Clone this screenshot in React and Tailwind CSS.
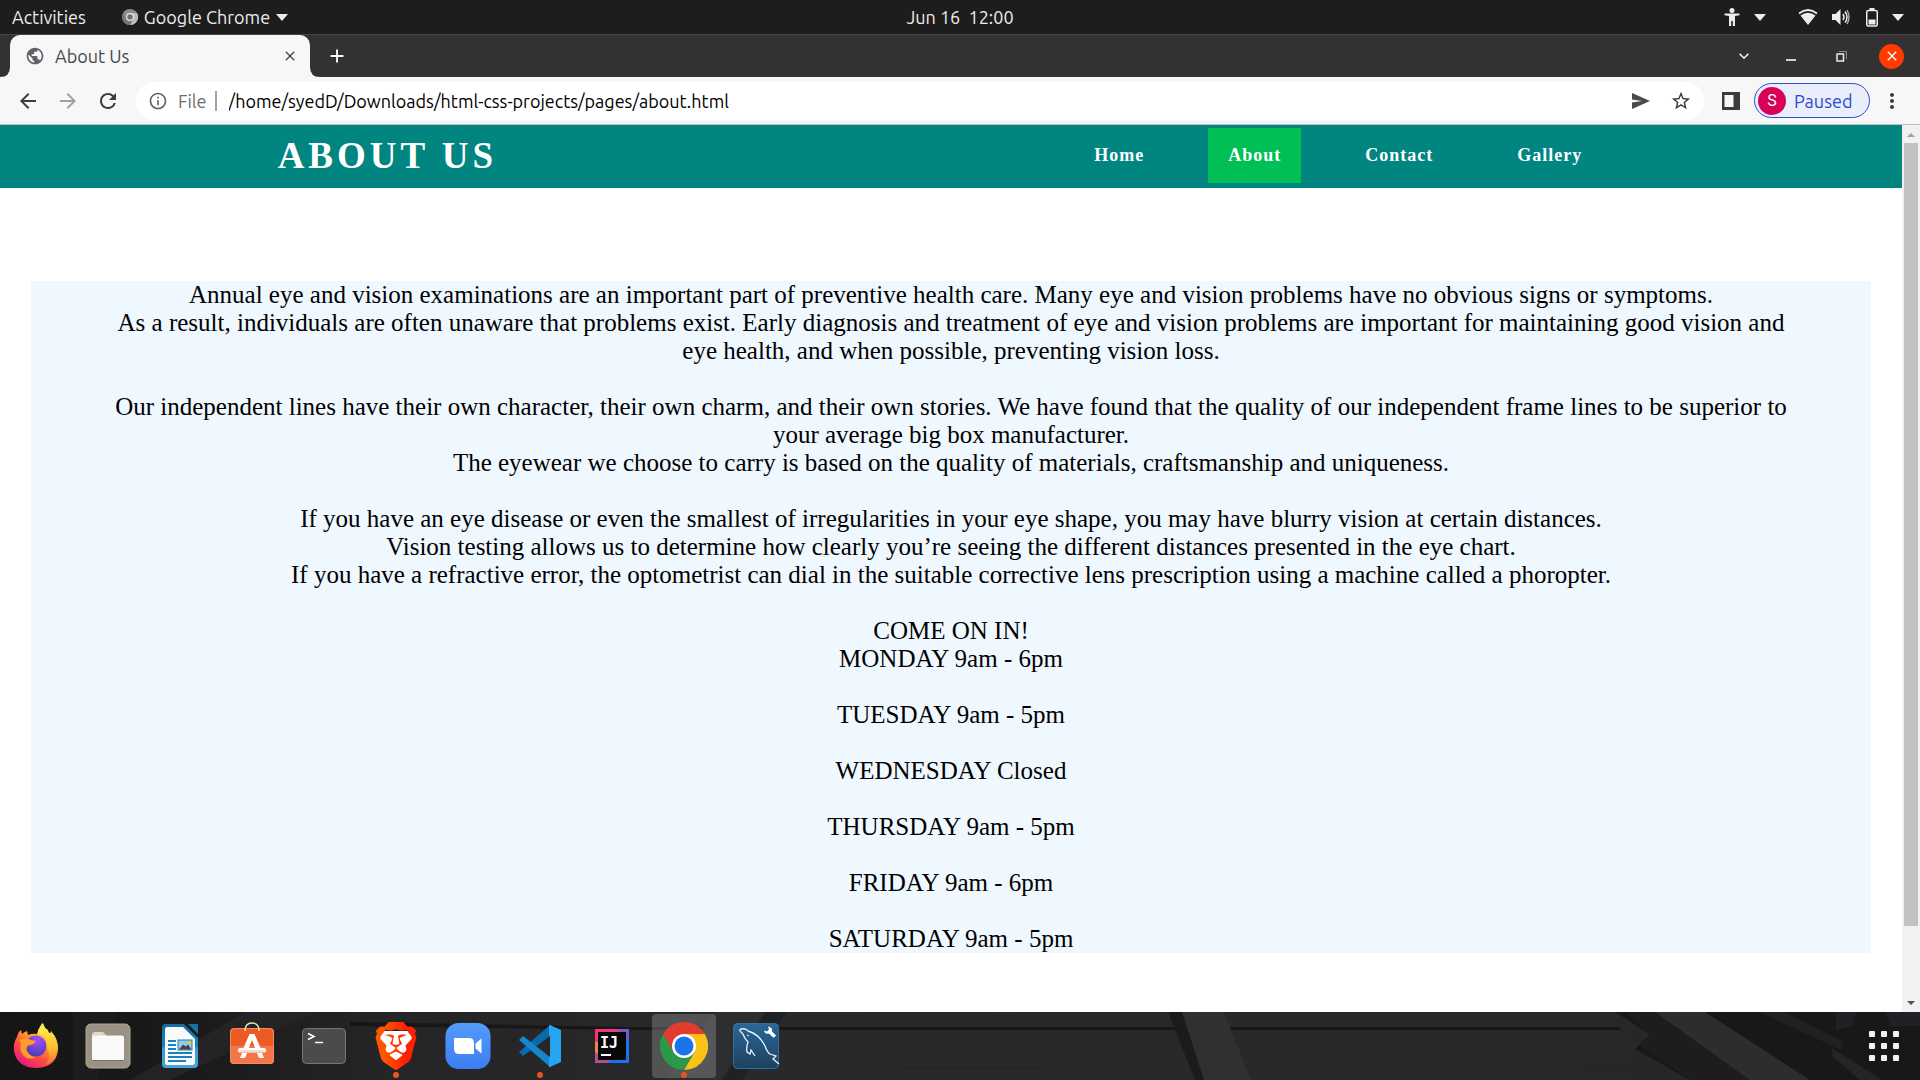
import React from "react";
import {
  MdArrowBack,
  MdArrowForward,
  MdClose,
  MdAdd,
  MdInfoOutline,
  MdKeyboardArrowDown,
  MdMoreVert,
  MdPublic,
  MdRefresh,
  MdStarBorder,
} from "react-icons/md";
import { SiBrave } from "react-icons/si";

const ui = "font-['Ubuntu','Noto_Sans',sans-serif]";

function Caret() {
  return (
    <svg className="h-[7px] w-3" viewBox="0 0 12 7" fill="#ececec">
      <path d="M0 0h12L6 7z" />
    </svg>
  );
}

function TopBar() {
  return (
    <header className="grid h-[34px] grid-cols-3 items-center bg-[#1d1d1d] px-3 text-[18px] leading-6 text-[#ececec]">
      <div className="flex items-center">
        <button type="button">Activities</button>
        <button type="button" className="ml-9 flex items-center gap-1.5">
          <svg className="size-4" viewBox="0 0 16 16">
            <circle cx="8" cy="8" r="8" fill="#8b8b8b" />
            <path d="M8 4h7a8 8 0 0 1-7 12l3.500-6z" fill="#bdbdbd" />
            <path d="M1.200 4A8 8 0 0 0 8 16l3-5-6 0z" fill="#777" />
            <circle cx="8" cy="8" r="4" fill="#e8e8e8" />
            <circle cx="8" cy="8" r="2.800" fill="#707070" />
          </svg>
          Google Chrome
          <Caret />
        </button>
      </div>
      <time className="text-center whitespace-pre">Jun 16  12:00</time>
      <div className="flex items-center justify-end pr-1">
        <button type="button" aria-label="Accessibility" className="mr-3 flex items-center gap-3.5">
          <svg className="h-[18px] w-4" viewBox="0 0 16 18" fill="#ececec">
            <circle cx="8" cy="2.500" r="2.500" />
            <path d="M.5 5.500h15v1.800L11 8v10H8.800v-5H7.200v5H5V8L.5 7.300z" />
          </svg>
          <Caret />
        </button>
        <button type="button" aria-label="System" className="ml-5 flex items-center gap-3.5">
          <svg className="h-4 w-5" viewBox="0 0 20 16">
            <path d="M1 4.500Q10-2.500 19 4.500" fill="none" stroke="#ececec" strokeWidth="1.800" />
            <path d="M2.500 6.500Q10 1 17.500 6.500L10 16z" fill="#ececec" />
          </svg>
          <svg className="h-4 w-[18px]" viewBox="0 0 18 16" fill="none" stroke="#ececec" strokeWidth="1.500">
            <path d="M0 5h3.500L8.500 0v16L3.500 11H0z" fill="#ececec" stroke="none" />
            <path d="M11 5q2 3 0 6M13 2.500q4 5.500 0 11" />
            <path d="M15 1q4 7 0 14" stroke="#aaa" />
          </svg>
          <svg className="ml-0.5 h-[19px] w-3" viewBox="0 0 12 19">
            <rect x=".75" y="2.500" width="10.500" height="15.500" rx="1.500" fill="none" stroke="#ececec" strokeWidth="1.500" />
            <path d="M3.500 0h5v2h-5zM2.500 11.500h7v5h-7z" fill="#ececec" />
          </svg>
          <Caret />
        </button>
      </div>
    </header>
  );
}

function TabStrip() {
  return (
    <div className="flex h-[43px] items-stretch justify-between border-t border-[#484648] bg-[#333132]">
      <div className="flex items-stretch">
        <svg className="w-2.5 self-end" viewBox="0 0 10 10" fill="#f7f7f7">
          <path d="M10 0v10H0Q10 10 10 0" />
        </svg>
        <div className="flex w-[300px] items-center rounded-t-[10px] bg-[#f7f7f7] pr-3 pl-[15px] text-[#45474a]">
          <MdPublic className="size-5 text-[#5f6368]" />
          <h2 className="ml-2.5 flex-1 text-[18px] leading-6">About Us</h2>
          <button type="button" aria-label="Close tab">
            <MdClose className="size-4" />
          </button>
        </div>
        <svg className="w-2.5 self-end" viewBox="0 0 10 10" fill="#f7f7f7">
          <path d="M0 0v10h10Q0 10 0 0" />
        </svg>
        <button type="button" aria-label="New tab" className="ml-1.5 text-white">
          <MdAdd className="size-[22px]" />
        </button>
      </div>
      <div className="flex items-center gap-8 pr-4 text-[#ececec]">
        <button type="button" aria-label="Search tabs">
          <MdKeyboardArrowDown className="size-5" />
        </button>
        <button type="button" aria-label="Minimize" className="mr-2 flex h-2.5 w-2.5 items-end">
          <span className="mt-3 h-0.5 w-full bg-[#d0d0d0]" />
        </button>
        <button type="button" aria-label="Restore">
          <svg className="size-[11px]" viewBox="0 0 11 11" fill="none">
            <path d="M3 .5h7.500V8" stroke="#8d8d8d" />
            <rect x="1" y="3" width="6.500" height="7" stroke="#ececec" strokeWidth="1.500" />
          </svg>
        </button>
        <button
          type="button"
          aria-label="Close"
          className="flex size-[25px] items-center justify-center rounded-full bg-[#ff3c00] text-white"
        >
          <MdClose className="size-4" />
        </button>
      </div>
    </div>
  );
}

function Toolbar() {
  return (
    <div className="flex h-12 items-center border-b border-[#c0c0c0] bg-[#f7f7f7] pr-4 pl-4 text-[#3c3c3c]">
      <div className="flex items-center gap-4">
        <button type="button" aria-label="Back">
          <MdArrowBack className="size-6" />
        </button>
        <button type="button" aria-label="Forward" className="text-[#a2a2a2]">
          <MdArrowForward className="size-6" />
        </button>
        <button type="button" aria-label="Reload">
          <MdRefresh className="size-6" />
        </button>
      </div>
      <div className="mr-4.5 ml-4 flex h-[38px] flex-1 items-center rounded-full bg-white pr-3 pl-3 text-[18px] leading-6">
        <MdInfoOutline className="size-5 text-[#5f6368]" />
        <label htmlFor="address" className="ml-2.5 text-[#6a6d72]">
          File
        </label>
        <span className="ml-2 h-5 w-0.5 bg-[#a0a0a0]" />
        <input
          id="address"
          className="ml-3 flex-1 text-black outline-none"
          defaultValue="/home/syedD/Downloads/html-css-projects/pages/about.html"
        />
        <button type="button" aria-label="Share" className="mr-5">
          <svg className="h-4 w-[18px]" viewBox="0 0 18 16" fill="#4a4a4a">
            <path d="M0 0l18 8L0 16V9.500L10 8 0 6.500z" />
          </svg>
        </button>
        <button type="button" aria-label="Bookmark">
          <MdStarBorder className="size-[22px]" />
        </button>
      </div>
      <button type="button" aria-label="Side panel" className="mr-3.5">
        <svg className="size-[18px]" viewBox="0 0 18 18">
          <rect width="18" height="18" fill="#3c3c3c" />
          <rect x="2.500" y="3" width="9" height="12" fill="#f7f7f7" />
        </svg>
      </button>
      <button
        type="button"
        className="flex h-[35px] w-[116px] items-center gap-2 rounded-full border border-[#2a4fd8] bg-[#e9eefa] pl-[3px] text-[18px] leading-6 text-[#2a4bd0]"
      >
        <span className="flex size-7 items-center justify-center rounded-full bg-[#d90057] font-['Roboto',sans-serif] text-base text-white">
          S
        </span>
        Paused
      </button>
      <button type="button" aria-label="Menu" className="ml-2.5">
        <MdMoreVert className="size-6" />
      </button>
    </div>
  );
}

const links = ["Home", "About", "Contact", "Gallery"];

const copy = [
  "Annual eye and vision examinations are an important part of preventive health care. Many eye and vision problems have no obvious signs or symptoms.",
  "As a result, individuals are often unaware that problems exist. Early diagnosis and treatment of eye and vision problems are important for maintaining good vision and eye health, and when possible, preventing vision loss.",
  "",
  "Our independent lines have their own character, their own charm, and their own stories. We have found that the quality of our independent frame lines to be superior to your average big box manufacturer.",
  "The eyewear we choose to carry is based on the quality of materials, craftsmanship and uniqueness.",
  "",
  "If you have an eye disease or even the smallest of irregularities in your eye shape, you may have blurry vision at certain distances.",
  "Vision testing allows us to determine how clearly you’re seeing the different distances presented in the eye chart.",
  "If you have a refractive error, the optometrist can dial in the suitable corrective lens prescription using a machine called a phoropter.",
  "",
  "COME ON IN!",
  "MONDAY 9am - 6pm",
  "",
  "TUESDAY 9am - 5pm",
  "",
  "WEDNESDAY Closed",
  "",
  "THURSDAY 9am - 5pm",
  "",
  "FRIDAY 9am - 6pm",
  "",
  "SATURDAY 9am - 5pm",
];

function AboutPage() {
  return (
    <div className="flex-1 bg-white font-['Liberation_Serif',serif]">
      <div className="flex h-[63px] items-center justify-around bg-[#008581] pb-0.5 text-white">
        <h1 className="text-[37px] leading-[44px] font-bold tracking-[4px]">ABOUT US</h1>
        <nav>
          <ul className="flex">
            {links.map((name) => (
              <li key={name} className="mx-[22px]">
                <a
                  href="#"
                  className={
                    name === "About"
                      ? "flex h-[55px] items-center bg-[#00bf55] px-5 text-[18px] font-bold tracking-[1px]"
                      : "flex h-[55px] items-center px-5 text-[18px] font-bold tracking-[1px]"
                  }
                >
                  {name}
                </a>
              </li>
            ))}
          </ul>
        </nav>
      </div>
      <main className="mx-[31px] mt-[93px] bg-[#eff7ff] px-20 text-center text-[25px] leading-7 text-black">
        {copy.map((line, i) => (
          <p key={i} className="min-h-7">
            {line}
          </p>
        ))}
      </main>
    </div>
  );
}

function Scrollbar() {
  return (
    <div className="flex w-[18px] flex-col items-center bg-[#f1f1f1]">
      <svg className="h-[18px] w-2" viewBox="0 0 8 18" fill="#a3a3a3">
        <path d="M0 12h8L4 8z" />
      </svg>
      <div className="w-full flex-1 px-0.5">
        <div className="h-[92%] bg-[#c1c1c1]" />
      </div>
      <svg className="h-[18px] w-2" viewBox="0 0 8 18" fill="#505050">
        <path d="M0 7h8L4 11z" />
      </svg>
    </div>
  );
}

function Firefox() {
  return (
    <svg className="size-12" viewBox="0 0 48 48">
      <defs>
        <linearGradient id="ffBody" x1=".85" y1=".1" x2=".25" y2="1">
          <stop offset="0" stopColor="#fff44f" />
          <stop offset=".35" stopColor="#ffa52a" />
          <stop offset=".65" stopColor="#ff4f3f" />
          <stop offset="1" stopColor="#e31587" />
        </linearGradient>
        <linearGradient id="ffTail" x1=".4" y1="0" x2=".5" y2="1">
          <stop offset="0" stopColor="#fff44f" />
          <stop offset=".6" stopColor="#ffc02e" />
          <stop offset="1" stopColor="#ff7139" />
        </linearGradient>
        <radialGradient id="ffGlobe" cx=".6" cy=".2" r=".8">
          <stop offset="0" stopColor="#a54bff" />
          <stop offset="1" stopColor="#4a3fb8" />
        </radialGradient>
      </defs>
      <path
        d="M5 15q1-5 4-7l1 4q2-2 5-3l1 4q5-2 9-1l5-11q2 5 6 7l1 4q2-1 2-3 8 9 7 19-2 17-21 18Q5 46 2 29q-1-8 3-14z"
        fill="url(#ffBody)"
      />
      <path d="M26 14q-2-6 5-13 2 7 8 11 8 8 5 20-3 8-10 11 5-8 2-16-4-7-10-13z" fill="url(#ffTail)" />
      <circle cx="24" cy="24" r="10.500" fill="url(#ffGlobe)" />
      <path d="M7 18q8-3 12 0l5 1q-1 3-6 4-5 1-3 6 3 6 9 6-8 4-13-2-4-5-2-12z" fill="#ff9a2b" />
      <path d="M25 12q9 1 10 9l-3-4q-3-4-8-4z" fill="#ffb22e" />
    </svg>
  );
}

function Files() {
  return (
    <svg className="size-12" viewBox="0 0 48 48">
      <rect x="2" y="2" width="44" height="44" rx="5" fill="#9a9283" stroke="#aea797" />
      <path d="M8 13q0-3 3-3h8l4 4h14v8H8z" fill="#dcd9cf" />
      <rect x="8" y="13.500" width="32" height="25" rx="2.500" fill="#fafafa" />
      <path d="M9 38.500h30" stroke="#776f61" />
    </svg>
  );
}

function Writer() {
  return (
    <svg className="size-12" viewBox="0 0 48 48">
      <defs>
        <linearGradient id="writer" x2="0" y2="1">
          <stop offset="0" stopColor="#126ca0" />
          <stop offset=".5" stopColor="#1687c4" />
          <stop offset=".55" stopColor="#3a9bd0" />
          <stop offset="1" stopColor="#46a5da" />
        </linearGradient>
      </defs>
      <path d="M10 2h18l14 14v26q0 4-4 4H10q-4 0-4-4V6q0-4 4-4z" fill="url(#writer)" />
      <path d="M32 2h10v10z" fill="#1374aa" />
      <path d="M11 5h16l12 12v23q0 3-3 3H11q-2 0-2-3V8q0-3 2-3z" fill="#fafafa" />
      <path d="M12 19h8M12 23h8M12 27h8M12 31h24M12 35h24M12 39h18" stroke="#1a82bd" strokeWidth="2" />
      <rect x="22" y="18" width="14" height="10" fill="#90cdea" stroke="#1a82bd" />
      <path d="M23 27.500l4-5 3 2 2-2 3.500 5z" fill="#454545" />
      <circle cx="33.500" cy="20.500" r="1.800" fill="#f4c430" />
    </svg>
  );
}

function Software() {
  return (
    <svg className="size-12" viewBox="0 0 48 48">
      <rect x="2" y="6" width="44" height="36" rx="4" fill="#ee5a24" />
      <path d="M2 24h44v14q0 4-4 4H6q-4 0-4-4z" fill="#f2764a" />
      <rect x="2.500" y="6.500" width="43" height="35" rx="4" fill="none" stroke="#f58c62" />
      <path d="M17 9q0-8 7-8t7 8" fill="none" stroke="#f1dfb0" strokeWidth="1.500" />
      <path d="M21.500 12h5L33 27h-5.500L24 18l-3.500 9H15z" fill="#fff" />
      <path d="M14 31h5l-2 5h-5zM29 31h5l2 5h-5z" fill="#fff" />
      <rect x="10" y="26" width="28" height="4.500" rx="2" fill="#fff" />
      <path d="M12 29h24" stroke="#f7b8a0" />
    </svg>
  );
}

function Terminal() {
  return (
    <svg className="size-12" viewBox="0 0 48 48">
      <rect x="2.500" y="6.500" width="43" height="35" rx="4" fill="#4b4b4b" stroke="#777" />
      <path d="M8 11.500l6 3-6 3M15 20.500h8" fill="none" stroke="#fff" strokeWidth="1.600" />
    </svg>
  );
}

function Brave() {
  return (
    <svg className="size-12" viewBox="0 0 48 48">
      <defs>
        <linearGradient id="brave">
          <stop offset=".2" stopColor="#ff5500" />
          <stop offset=".75" stopColor="#ff2000" />
        </linearGradient>
      </defs>
      <path d="M12 9h24l5 7-5 20-12 8-12-8-5-20z" fill="#fff" />
      <SiBrave size="48" fill="url(#brave)" stroke="none" />
    </svg>
  );
}

function Zoom() {
  return (
    <svg className="size-12" viewBox="0 0 48 48">
      <defs>
        <linearGradient id="zoomBg" x2="0" y2="1">
          <stop offset="0" stopColor="#529bfa" />
          <stop offset="1" stopColor="#3e7df5" />
        </linearGradient>
      </defs>
      <rect x="1.500" y="1" width="45" height="46" rx="13" fill="url(#zoomBg)" />
      <path d="M10 16h15q5 0 5 5v11H15q-5 0-5-5z" fill="#fff" />
      <path d="M31.500 21.500l6-5v15l-6-5z" fill="#fff" />
    </svg>
  );
}

function VsCode() {
  return (
    <svg className="size-12" viewBox="0 0 48 48">
      <path d="M3 30l4 4 27-20V3z" fill="#0b69ad" />
      <path d="M3 18l4-4 27 21v10z" fill="#1386cf" />
      <path d="M34 3l11 5v32l-11 5z" fill="#27a4ee" />
      <path d="M34 3v11M34 35v10" stroke="#27a4ee" strokeWidth="2" />
    </svg>
  );
}

function IntelliJ() {
  return (
    <svg className="size-12" viewBox="0 0 48 48">
      <path d="M7 7h34v34H7z" fill="#b24f91" />
      <path d="M7 7h16l-10 13H7z" fill="#fb3470" />
      <path d="M7 20h5v13l-5-3z" fill="#e98645" />
      <path d="M23 7h18v34H20l14-15V12z" fill="#1674ef" />
      <path d="M24 7h10l-2 5H18z" fill="#e3427c" />
      <path d="M29 7h12v11z" fill="#7459c8" />
      <path d="M10 10h28v28H10z" fill="#080808" />
      <text x="12" y="26" fill="#fff" className="font-['DejaVu_Sans_Mono',monospace] text-[15px] font-bold">
        IJ
      </text>
      <path d="M13 33h10" stroke="#fff" strokeWidth="2" />
    </svg>
  );
}

function Chrome() {
  return (
    <svg className="size-12" viewBox="0 0 48 48">
      <path d="M24 12h20.800A24 24 0 0 1 24 48L34.400 30z" fill="#fbc116" />
      <path d="M3.200 12A24 24 0 0 1 44.800 12H24L13.600 30z" fill="#e33b2e" />
      <path d="M3.200 12A24 24 0 0 0 24 48L34.400 30H13.600z" fill="#2a9a48" />
      <circle cx="24" cy="24" r="12" fill="#fff" />
      <circle cx="24" cy="24" r="9.500" fill="#1a73e8" />
    </svg>
  );
}

function Workbench() {
  return (
    <svg className="size-12" viewBox="0 0 48 48">
      <defs>
        <linearGradient id="bench" x2="0" y2="1">
          <stop offset="0" stopColor="#2b6799" />
          <stop offset="1" stopColor="#1d405f" />
        </linearGradient>
      </defs>
      <rect x="1.500" y="1.500" width="45" height="45" rx="4" fill="url(#bench)" stroke="#316f9f" />
      <path
        d="M23 34l-4-6-1 4-3-2q-1-5 1-10-4-4-5-8-5-4-2-5 5-1 7 2 11 3 17 15 2 6 5 8l6 2-3 3 6 5"
        fill="none"
        stroke="#e9f4fb"
        strokeWidth="1.300"
      />
      <circle cx="16" cy="13.500" r=".8" fill="#fff" />
      <path d="M36 4.500l1 3-2 2-3-1q1 4 5 3l4 4q2 0 3-2l-4-4q1-4-4-5z" fill="#fff" />
    </svg>
  );
}

const apps = [
  { name: "Firefox", Icon: Firefox },
  { name: "Files", Icon: Files },
  { name: "Writer", Icon: Writer },
  { name: "Software", Icon: Software },
  { name: "Terminal", Icon: Terminal },
  { name: "Brave", Icon: Brave, open: true },
  { name: "Zoom", Icon: Zoom },
  { name: "Code", Icon: VsCode, open: true },
  { name: "IntelliJ", Icon: IntelliJ },
  { name: "Chrome", Icon: Chrome, open: true, active: true },
  { name: "Workbench", Icon: Workbench },
];

function Wood() {
  return (
    <svg className="absolute inset-0 h-full w-full" viewBox="0 0 1920 68" preserveAspectRatio="none">
      <defs>
        <linearGradient id="plank">
          <stop offset="0" stopColor="#151515" />
          <stop offset=".1" stopColor="#1a1a1b" />
          <stop offset=".2" stopColor="#252527" />
          <stop offset=".4" stopColor="#29292b" />
          <stop offset=".8" stopColor="#282829" />
          <stop offset="1" stopColor="#242425" />
        </linearGradient>
      </defs>
      <rect width="1920" height="68" fill="url(#plank)" />
      <path d="M73 0h45l-20 68H73z" fill="#1c1c1e" />
      <path d="M245 0h70L170 68h-40z" fill="#242426" />
      <path d="M350 10l280 5h540l450 0v3H640l-290-4z" fill="#171717" />
      <path d="M715 0h50l-40 68h-60z" fill="#2e2e31" />
      <path d="M765 0h22l-45 68h-20z" fill="#212122" />
      <path d="M830 31h300M870 44h260M900 56h180M1270 30h300M1290 45h240M1400 55h260" stroke="#242425" strokeWidth="1" />
      <path d="M1168 0h14l25 68h-12z" fill="#1c1b1a" />
      <path d="M1182 0h42l27 68h-47z" fill="#303031" />
      <path d="M1615 0h305v68H1690l-55-31 15-15z" fill="#181818" />
      <path d="M1625 0h30l110 68h-75l-50-35 10-10z" fill="#1e1d1b" />
      <path d="M1655 0h50l105 68h-60z" fill="#2d2d2f" />
      <path d="M1760 0h24l60 30-3 8z" fill="#212123" />
      <path d="M1836 0h20l-4 14-16 4zM1886 0h34v14h-30z" fill="#202126" />
      <path d="M1832 36l50 32h-22l-28-24z" fill="#252526" />
    </svg>
  );
}

function Dock() {
  return (
    <footer className="relative h-[68px] bg-[#222]">
      <Wood />
      <div className="relative flex h-full items-center justify-between pr-[21px] pl-1">
        <div className="flex gap-2">
          {apps.map(({ name, Icon, open, active }) => (
            <button
              key={name}
              type="button"
              aria-label={name}
              className={
                active
                  ? "relative flex size-16 items-center justify-center rounded bg-white/20"
                  : "relative flex size-16 items-center justify-center rounded"
              }
            >
              <Icon />
              {open && <span className="absolute bottom-0 left-[29px] size-1.5 rounded-full bg-[#e95420]" />}
            </button>
          ))}
        </div>
        <button type="button" aria-label="Show applications" className="grid grid-cols-3 gap-1.5">
          {Array.from({ length: 9 }, (_, i) => (
            <span key={i} className="size-1.5 rounded-[1px] bg-[#f2f2f2]" />
          ))}
        </button>
      </div>
    </footer>
  );
}

export default function App() {
  return (
    <div className={`flex min-h-screen flex-col ${ui}`}>
      <TopBar />
      <TabStrip />
      <Toolbar />
      <div className="flex flex-1 items-stretch">
        <AboutPage />
        <Scrollbar />
      </div>
      <Dock />
    </div>
  );
}
